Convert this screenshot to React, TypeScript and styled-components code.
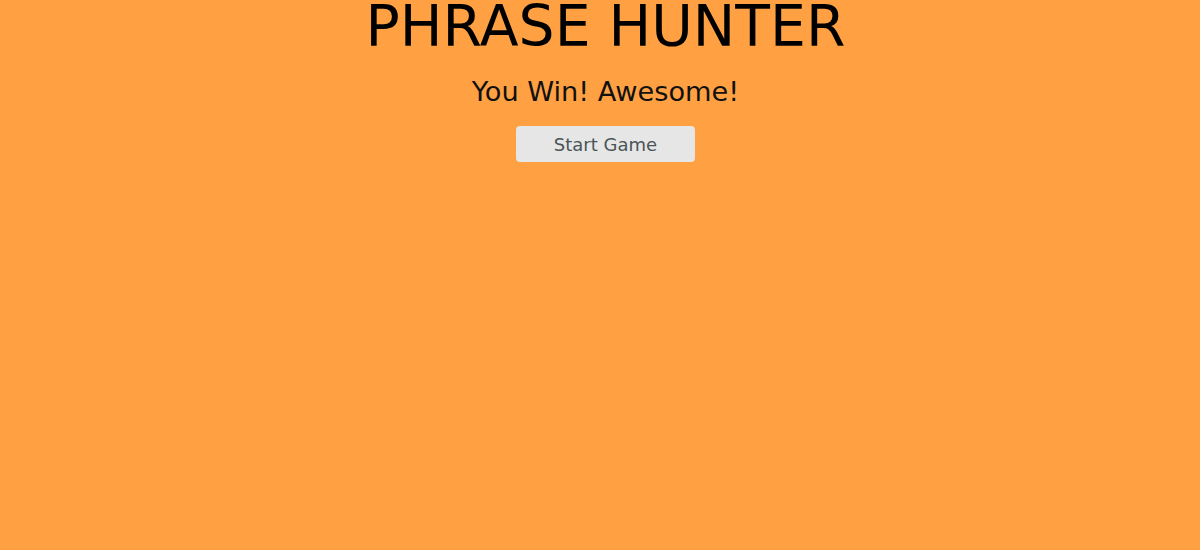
import React from "react";
import styled, { createGlobalStyle } from "styled-components";

const Global = createGlobalStyle`
  html, body { margin: 0; padding: 0; background: #ffa142; }
  body { font-family: "DejaVu Sans", "Noto Sans", sans-serif; }
`;

const Overlay = styled.main`
  min-height: 550px;
  box-sizing: border-box;
  padding-left: 11px;
  background: #ffa142;
  display: flex;
  flex-direction: column;
  align-items: center;
`;

const Title = styled.h1`
  margin: 0;
  font-size: 56.8px;
  font-weight: 400;
  line-height: 53px;
  color: #000;
`;

const Message = styled.h2`
  margin: 19px 0 0;
  font-size: 27.2px;
  font-weight: 400;
  line-height: 40px;
  color: #111;
`;

const StartButton = styled.button`
  margin-top: 14px;
  width: 179px;
  height: 36px;
  border: none;
  border-radius: 4px;
  background: #e6e6e6;
  color: #4a5556;
  font-family: "DejaVu Sans", "Noto Sans", sans-serif;
  font-size: 18px;
  cursor: pointer;
`;

export default function App() {
  return (
    <>
      <Global />
      <Overlay>
        <Title>PHRASE HUNTER</Title>
        <Message>You Win! Awesome!</Message>
        <StartButton>Start Game</StartButton>
      </Overlay>
    </>
  );
}
